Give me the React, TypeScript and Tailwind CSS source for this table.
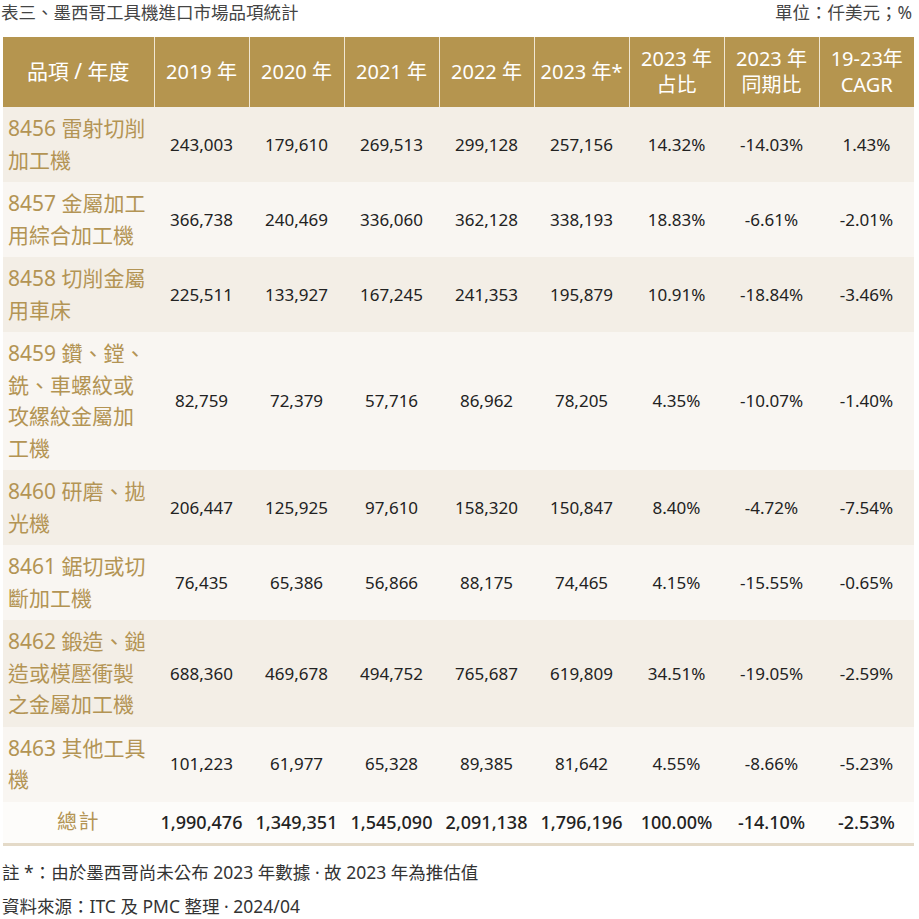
const rows = [
  { label: "8456 雷射切削加工機", v: ["243,003", "179,610", "269,513", "299,128", "257,156", "14.32%", "-14.03%", "1.43%"] },
  { label: "8457 金屬加工用綜合加工機", v: ["366,738", "240,469", "336,060", "362,128", "338,193", "18.83%", "-6.61%", "-2.01%"] },
  { label: "8458 切削金屬用車床", v: ["225,511", "133,927", "167,245", "241,353", "195,879", "10.91%", "-18.84%", "-3.46%"] },
  { label: "8459 鑽、鏜、銑、車螺紋或攻縲紋金屬加工機", v: ["82,759", "72,379", "57,716", "86,962", "78,205", "4.35%", "-10.07%", "-1.40%"] },
  { label: "8460 研磨、拋光機", v: ["206,447", "125,925", "97,610", "158,320", "150,847", "8.40%", "-4.72%", "-7.54%"] },
  { label: "8461 鋸切或切斷加工機", v: ["76,435", "65,386", "56,866", "88,175", "74,465", "4.15%", "-15.55%", "-0.65%"] },
  { label: "8462 鍛造、鎚造或模壓衝製之金屬加工機", v: ["688,360", "469,678", "494,752", "765,687", "619,809", "34.51%", "-19.05%", "-2.59%"] },
  { label: "8463 其他工具機", v: ["101,223", "61,977", "65,328", "89,385", "81,642", "4.55%", "-8.66%", "-5.23%"] },
];

const total = ["1,990,476", "1,349,351", "1,545,090", "2,091,138", "1,796,196", "100.00%", "-14.10%", "-2.53%"];

const heads: string[][] = [
  ["2019 年"],
  ["2020 年"],
  ["2021 年"],
  ["2022 年"],
  ["2023 年*"],
  ["2023 年", "占比"],
  ["2023 年", "同期比"],
  ["19-23年", "CAGR"],
];

export default function App() {
  return (
    <div className="w-[919px] h-[919px] bg-white font-['Noto_Sans','Noto_Sans_CJK_TC',sans-serif] text-[#333]">
      <div className="flex h-[25px] items-center justify-between pl-[1px] pr-[7px] text-[17.5px] text-[#444]">
        <span>表三、墨西哥工具機進口市場品項統計</span>
        <span>單位：仟美元；%</span>
      </div>

      <table className="mt-[12px] ml-[3px] w-[911px] table-fixed border-collapse">
        <colgroup>
          <col className="w-[151px]" />
          {heads.map((_, i) => (
            <col key={i} className="w-[95px]" />
          ))}
        </colgroup>
        <thead>
          <tr className="h-[70px] bg-[#b5954f] text-white">
            <th className="text-[21px] font-normal">品項 / 年度</th>
            {heads.map((h, i) => (
              <th key={i} className="border-l border-[#f1e7d2] text-[20px] font-normal leading-[26px] whitespace-nowrap">
                {h.map((line, j) => (
                  <div key={j}>{line}</div>
                ))}
              </th>
            ))}
          </tr>
        </thead>
        <tbody>
          {rows.map((r, i) => (
            <tr key={i} className={i % 2 === 0 ? "bg-[#f3eee6]" : "bg-[#f9f6f2]"}>
              <td className="py-[6px] pl-[5px] pr-0 text-[21px] leading-[31.5px] text-[#b39454]">
                {r.label}
              </td>
              {r.v.map((v, j) => (
                <td key={j} className="text-center text-[17px] text-[#222]">
                  {v}
                </td>
              ))}
            </tr>
          ))}
          <tr className="h-[43px] border-b-[3px] border-[#e4dac8] bg-[#fdfcfa]">
            <td className="text-center text-[20px] tracking-[1.5px] text-[#b39454]">總計</td>
            {total.map((v, j) => (
              <td key={j} className="text-center text-[18px] font-medium text-[#222]">
                {v}
              </td>
            ))}
          </tr>
        </tbody>
      </table>

      <div className="mt-[9px] pl-[2px] text-[17.5px] leading-[34px] text-[#333]">
        <div>註 *：由於墨西哥尚未公布 2023 年數據 · 故 2023 年為推估值</div>
        <div>資料來源：ITC 及 PMC 整理 · 2024/04</div>
      </div>
    </div>
  );
}
